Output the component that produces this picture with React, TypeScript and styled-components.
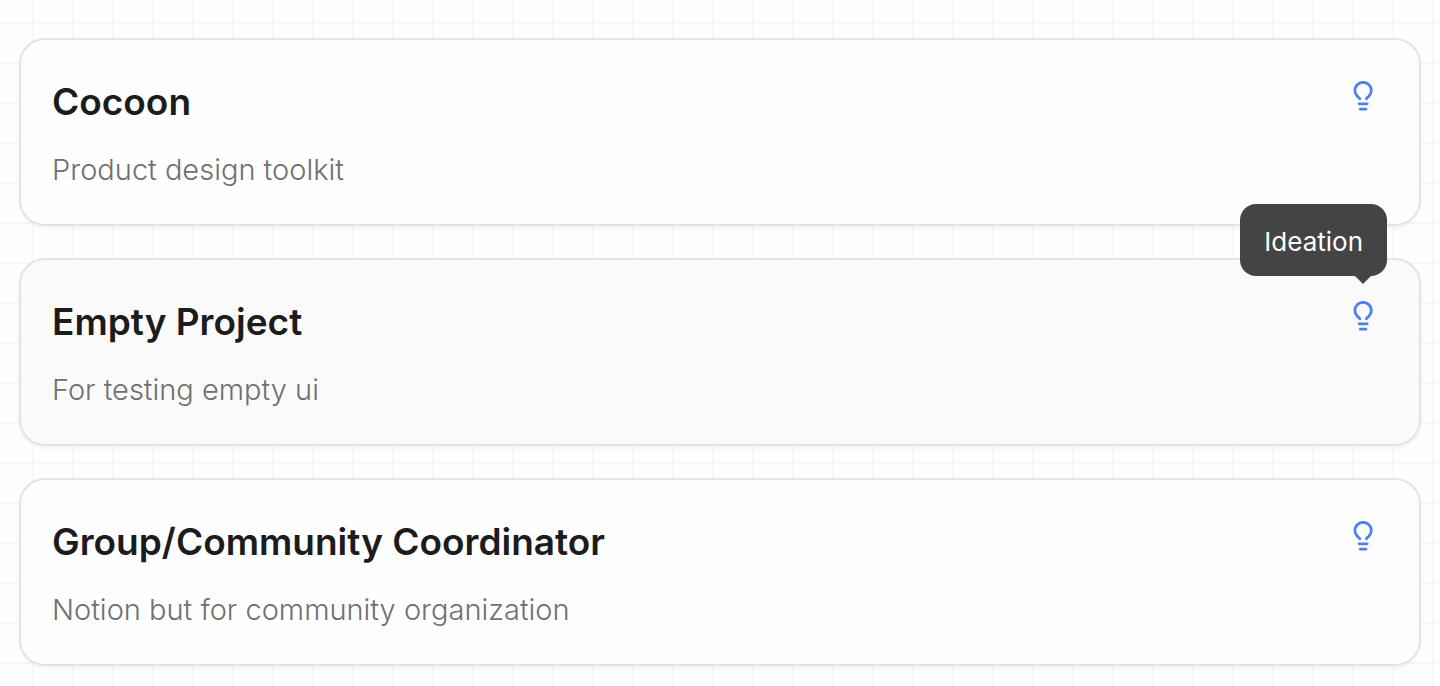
import React from "react";
import styled, { createGlobalStyle } from "styled-components";

const GlobalStyle = createGlobalStyle`
  *, *::before, *::after { box-sizing: border-box; }
  body {
    margin: 0;
    font-family: Inter, "Liberation Sans", sans-serif;
    background-color: #fefefe;
    background-image:
      linear-gradient(to right, #f8f8f8 2px, transparent 2px),
      linear-gradient(to bottom, #f8f8f8 2px, transparent 2px);
    background-size: 40px 40px;
    background-position: 32px 22px;
  }
`;

const ProjectList = styled.main`
  display: flex;
  flex-direction: column;
  gap: 32px;
  padding: 38px 19px 20px;
`;

const Card = styled.article<{ $active?: boolean }>`
  display: flex;
  align-items: flex-start;
  justify-content: space-between;
  gap: 32px;
  padding: 38px 40px 34px 31px;
  border: 2px solid #e4e4e8;
  border-radius: 26px;
  background: ${({ $active }) => ($active ? "#fafafa" : "#fefefe")};
  box-shadow: 0 2px 4px rgba(0, 0, 0, 0.05);
`;

const CardText = styled.div`
  display: flex;
  flex-direction: column;
  gap: 24px;
`;

const Title = styled.h2`
  margin: 0;
  color: #1c1c1c;
  font-size: 37px;
  font-weight: 600;
  line-height: 48px;
`;

const Description = styled.p`
  margin: 0;
  color: #707070;
  font-size: 29px;
  font-weight: 300;
  line-height: 40px;
`;

const StageButton = styled.button`
  position: relative;
  display: flex;
  margin-top: 3px;
  padding: 0;
  border: 0;
  background: none;
  color: #4f80ee;
  font-family: inherit;
  cursor: pointer;
`;

const Tooltip = styled.span`
  position: absolute;
  right: -8px;
  bottom: calc(100% + 25px);
  padding: 18px 24px 14px;
  border-radius: 16px;
  background: #444444;
  color: #ffffff;
  font-size: 26px;
  font-weight: 400;
  line-height: 40px;
  white-space: nowrap;

  &::after {
    content: "";
    position: absolute;
    top: 100%;
    right: 16px;
    border: 8px solid transparent;
    border-top-color: #444444;
    border-bottom: 0;
  }
`;

const BulbIcon = () => (
  <svg
    width="32"
    height="32"
    viewBox="0 0 32 32"
    fill="none"
    stroke="currentColor"
    strokeWidth="2.8"
    strokeLinecap="round"
    strokeLinejoin="round"
    aria-hidden="true"
  >
    <path d="M12.8 17.8C12.5 16.7 11.6 16.4 10.6 15.6A8.2 8.2 0 1 1 21.6 15.6C20.6 16.4 19.7 16.7 19.4 17.8" />
    <path d="M12 22.8h8.2M13.3 28.2h5.6" />
  </svg>
);

interface Project {
  name: string;
  description: string;
  active?: boolean;
}

const projects: Project[] = [
  { name: "Cocoon", description: "Product design toolkit" },
  { name: "Empty Project", description: "For testing empty ui", active: true },
  {
    name: "Group/Community Coordinator",
    description: "Notion but for community organization",
  },
];

export default function App() {
  return (
    <>
      <GlobalStyle />
      <ProjectList>
        {projects.map(({ name, description, active }) => (
          <Card key={name} $active={active}>
            <CardText>
              <Title>{name}</Title>
              <Description>{description}</Description>
            </CardText>
            <StageButton type="button" aria-label="Ideation">
              <BulbIcon />
              {active && <Tooltip role="tooltip">Ideation</Tooltip>}
            </StageButton>
          </Card>
        ))}
      </ProjectList>
    </>
  );
}
